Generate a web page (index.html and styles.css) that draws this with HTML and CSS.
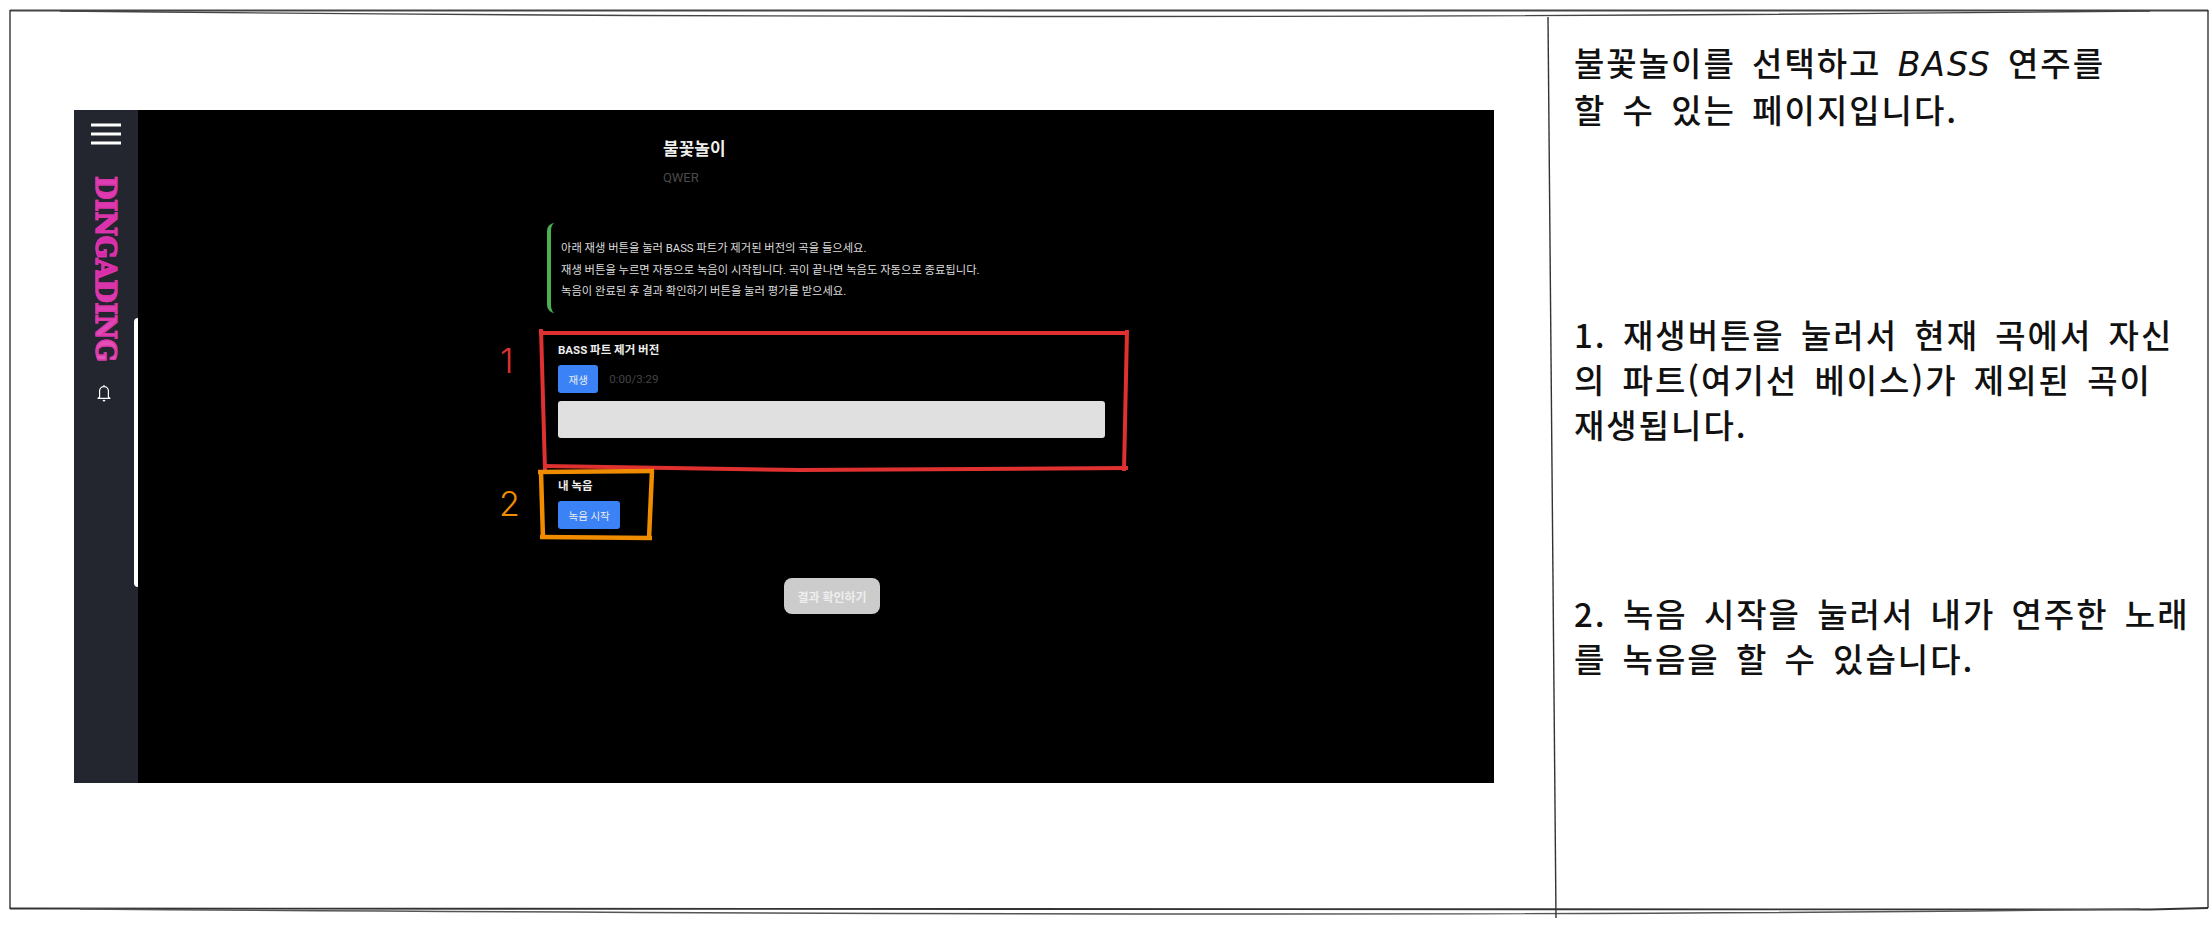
FILE: index.html
```html
<!DOCTYPE html>
<html lang="ko">
	<head>
		<meta charset="utf-8">
		<title>불꽃놀이 BASS 연주</title>
		<link rel="stylesheet" href="styles.css">
	</head>
	<body>
		<div class="sheet">
			<section class="shot-panel">
				<div class="screen">
					<aside class="sidebar">
						<svg class="menu-icon" viewBox="0 0 30 22" width="30" height="22">
							<path d="M0 2h30M0 11h30M0 20h30" stroke="#fff" stroke-width="3" />
						</svg>
						<div class="logo">DINGADING</div>
						<svg class="bell-icon" viewBox="0 0 16 18" width="16" height="18" fill="none" stroke="#fff" stroke-width="1.2">
							<path d="M8 1v1.2M3.6 13V7a4.4 4.4 0 0 1 8.8 0v6l1.6 1.4H2z" stroke-linejoin="round" />
							<path d="M6.8 16.6h2.4" stroke-width="1.5" />
						</svg>
						<div class="side-thumb"></div>
					</aside>
					<main class="content">
						<header class="song-head">
							<h1>불꽃놀이</h1>
							<p>QWER</p>
						</header>
						<div class="notice">
							<p>아래 재생 버튼을 눌러 BASS 파트가 제거된 버전의 곡을 들으세요.</p>
							<p>재생 버튼을 누르면 자동으로 녹음이 시작됩니다. 곡이 끝나면 녹음도 자동으로 종료됩니다.</p>
							<p>녹음이 완료된 후 결과 확인하기 버튼을 눌러 평가를 받으세요.</p>
						</div>
						<div class="track">
							<h2>BASS 파트 제거 버전</h2>
							<div class="player">
								<button class="btn">재생</button>
								<span class="time">0:00/3:29</span>
							</div>
							<div class="wave"></div>
						</div>
						<div class="track track-mine">
							<h2>내 녹음</h2>
							<button class="btn">녹음 시작</button>
						</div>
						<div class="result-row">
							<button class="btn-result">결과 확인하기</button>
						</div>
					</main>
				</div>
			</section>
			<section class="notes">
				<p class="note-1">불꽃놀이를 선택하고 <span class="hand-latin">BASS</span> 연주를<br>할 수 있는 페이지입니다.</p>
				<p class="note-2">1. 재생버튼을 눌러서 현재 곡에서 자신<br>의 파트(여기선 베이스)가 제외된 곡이<br>재생됩니다.</p>
				<p class="note-3">2. 녹음 시작을 눌러서 내가 연주한 노래<br>를 녹음을 할 수 있습니다.</p>
			</section>

			<!-- hand drawn marks on top of the page -->
			<svg class="sketch" viewBox="0 0 2210 927" width="2210" height="927" fill="none">
				<g stroke="#333" stroke-width="1.4">
					<path d="M10 10.5H2208" stroke-width="2" stroke="#444" />
					<path d="M60 11Q1100 22 2150 11" stroke="#444" />
					<path d="M10 10V909" />
					<path d="M2208 10V908" />
					<path d="M10 908.5L1000 909L2150 909.5L2208 908" stroke-width="1.8" />
					<path d="M80 909Q1400 919 2140 909" stroke="#555" />
					<path d="M1548 17L1556 918" />
				</g>
				<g stroke="#e03131" stroke-width="4">
					<path d="M539 333H1128" />
					<path d="M541 329L545 470" />
					<path d="M1127 330L1124 471" />
					<path d="M544 466L800 470L1128 468" />
				</g>
				<g stroke="#f08c00" stroke-width="4.5">
					<path d="M538 472L654 471" />
					<path d="M541 472L543 539" />
					<path d="M652 471L649 539" />
					<path d="M540 537L652 538" />
				</g>
			</svg>
			<span class="mark mark-red">1</span>
			<span class="mark mark-orange">2</span>
		</div>
	</body>
</html>
```

FILE: styles.css
```css
* {
	box-sizing: border-box;
}

body {
	margin: 0;
	background: #fff;
	font-family: Roboto, "Noto Sans CJK KR", sans-serif;
}

.sheet {
	position: relative;
	display: grid;
	grid-template-columns: 1550px 1fr;
	width: 2210px;
	height: 927px;
	overflow: hidden;
}

.shot-panel {
	padding: 110px 0 0 74px;
}

.screen {
	display: flex;
	width: 1420px;
	height: 673px;
	background: #000;
}

.sidebar {
	position: relative;
	display: flex;
	flex-direction: column;
	align-items: center;
	width: 64px;
	padding-top: 13px;
	background: #23262f;
}

.menu-icon {
	margin-left: -1px;
}

.logo {
	writing-mode: vertical-rl;
	margin: 31px 2px 0 0;
	font-family: "DejaVu Serif", serif;
	font-size: 27px;
	font-weight: 700;
	line-height: 24px;
	letter-spacing: -0.3px;
	background: linear-gradient(#e040b4, #d628a8 45%, #e558b8);
	-webkit-background-clip: text;
	background-clip: text;
	color: transparent;
	-webkit-text-stroke: 1.2px #dc34ab;
}

.bell-icon {
	margin: 22px 4px 0 0;
}

.side-thumb {
	position: absolute;
	top: 208px;
	right: 0;
	width: 4px;
	height: 269px;
	background: #fff;
	border-radius: 4px 0 0 4px;
}

.content {
	width: 982px;
	padding: 0 0 0 409px;
	color: #fff;
}

.song-head {
	padding: 27px 0 0 116px;
	height: 113px;
}

.song-head h1 {
	margin: 0;
	font-size: 17px;
	font-weight: 700;
	line-height: 24px;
	color: #eee;
}

.song-head p {
	margin: 8px 0 0;
	font-size: 13px;
	line-height: 18px;
	color: #4a4a4a;
}

.notice {
	height: 90px;
	padding: 15px 0 0 10px;
	border-left: 4px solid #4caf50;
	border-radius: 8px;
	font-size: 11.3px;
	line-height: 21.5px;
	color: #ddd;
}

.notice p {
	margin: 0;
}

.track {
	padding: 28px 0 0 11px;
}

.track h2 {
	margin: 0;
	font-size: 11.5px;
	font-weight: 700;
	line-height: 18px;
	color: #eee;
}

.player {
	display: flex;
	align-items: center;
	gap: 11px;
	margin-top: 6px;
}

.btn {
	display: block;
	height: 28px;
	padding: 0 10.5px;
	border: none;
	border-radius: 3px;
	background: #3b82f6;
	color: #eee;
	font-family: inherit;
	font-size: 10.5px;
}

.time {
	font-size: 11.5px;
	color: #444;
}

.wave {
	width: 547px;
	height: 37px;
	margin-top: 8px;
	background: #e0e0e0;
	border-radius: 3px;
}

.track-mine {
	padding-top: 39px;
}

.track-mine .btn {
	margin-top: 6px;
}

.result-row {
	display: flex;
	justify-content: center;
	width: 570px;
	margin-top: 49px;
}

.btn-result {
	width: 96px;
	height: 36px;
	border: none;
	border-radius: 8px;
	background: #ccc;
	color: #eee;
	font-family: inherit;
	font-size: 12px;
	font-weight: 700;
}

.notes {
	padding: 40px 0 0 24px;
	font-family: "Noto Sans CJK KR", sans-serif;
	font-size: 33px;
	font-weight: 500;
	line-height: 45px;
	letter-spacing: 2px;
	word-spacing: 5px;
	color: #111;
}

.notes p {
	margin: 0;
	white-space: nowrap;
}

.hand-latin {
	font-family: "DejaVu Sans", sans-serif;
	font-style: italic;
	font-weight: 400;
}

.note-2 {
	padding-top: 180px;
}

.note-3 {
	padding-top: 144px;
}

.sketch {
	position: absolute;
	top: 0;
	left: 0;
}

.mark {
	position: absolute;
	font-family: Inter, sans-serif;
	font-size: 34px;
	font-weight: 300;
	line-height: 40px;
}

.mark-red {
	top: 341px;
	left: 500px;
	color: #e03131;
}

.mark-orange {
	top: 484px;
	left: 499px;
	color: #f08c00;
}
```
